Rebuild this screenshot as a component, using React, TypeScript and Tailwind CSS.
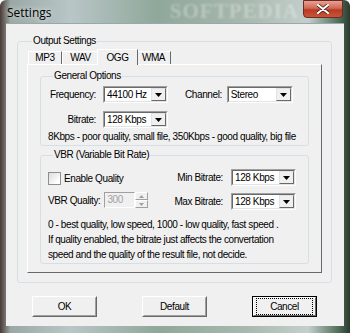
import React from "react";

const font = { fontFamily: '"Liberation Sans", Arial, sans-serif' };

function Combo({ value, width = "w-[65px]" }: { value: string; width?: string }) {
  return (
    <div
      className={`${width} h-[17px] flex bg-white border border-t-[#a0a0a0] border-l-[#a0a0a0] border-r-white border-b-white`}
    >
      <div className="flex-1 flex border border-t-[#696969] border-l-[#696969] border-r-[#e3e3e3] border-b-[#e3e3e3]">
        <span className="flex-1 pl-[2px] leading-[13px] text-black whitespace-nowrap overflow-hidden">{value}</span>
        <div className="w-[15px] bg-[#f0f0f0] border border-t-[#e3e3e3] border-l-[#e3e3e3] border-r-[#696969] border-b-[#696969] flex items-center justify-center">
          <svg width="7" height="4" viewBox="0 0 7 4">
            <path d="M0 0h7L3.5 4z" fill="#000" />
          </svg>
        </div>
      </div>
    </div>
  );
}

function Group({ title, className = "", children }: { title: string; className?: string; children: React.ReactNode }) {
  return (
    <fieldset className={`border border-[#d5dfe5] rounded-[3px] min-w-0 ${className}`}>
      <legend className="ml-[5px] px-[1px] leading-[12px] text-black">{title}</legend>
      {children}
    </fieldset>
  );
}

function Tab({ label, width, active = false }: { label: string; width: string; active?: boolean }) {
  return (
    <div
      className={`${width} flex items-center justify-center border-t border-l border-r border-t-white border-l-white border-r-[#696969] bg-[#f0f0f0] ${
        active ? "h-[16px] -mx-[2px] z-10 -mb-[1px] relative" : "h-[13px] mt-[2px]"
      }`}
    >
      <span className="leading-[12px]">{label}</span>
    </div>
  );
}

function Button({ label, focused = false }: { label: string; focused?: boolean }) {
  return (
    <div
      className={`w-[65px] h-[21px] border ${
        focused ? "border-black" : "border-t-white border-l-white border-r-[#696969] border-b-[#696969]"
      } bg-[#f0f0f0] flex`}
    >
      <div
        className={`flex-1 flex items-center justify-center border ${
          focused
            ? "border-t-white border-l-white border-r-[#696969] border-b-[#696969]"
            : "border-t-[#f0f0f0] border-l-[#f0f0f0] border-r-[#a0a0a0] border-b-[#a0a0a0]"
        }`}
      >
        <div
          className={`w-full h-full flex items-center justify-center ${
            focused ? "border border-dotted border-black m-[2px]" : ""
          }`}
        >
          {label}
        </div>
      </div>
    </div>
  );
}

export default function App() {
  return (
    <div
      className="w-[350px] h-[333px] flex flex-col overflow-hidden text-[10px] tracking-[-0.4px] text-black"
      style={font}
    >
      <div className="w-full h-full flex flex-col bg-[linear-gradient(90deg,#4a3a36_0%,#9aa8a4_3%,#b9c6c7_20%,#8fa89a_45%,#a8b8ae_70%,#c4cfcc_88%,#4d6b55_97%,#2a3a2e_100%)] rounded-t-[6px]">
        {/* title bar */}
        <div className="h-[23px] flex items-start pl-[7px] pr-[7px] overflow-hidden">
          <span
            className="mt-[6px] text-[12px] leading-[14px] tracking-normal text-black"
            style={{ fontFamily: '"Open Sans", "Liberation Sans", sans-serif', textShadow: "0 0 6px #fff" }}
          >
            Settings
          </span>
          <div className="flex-1 flex justify-end pr-[4px]">
            <span
              className="mt-[1px] text-[21px] leading-[21px] font-bold tracking-[1px] text-white/30 blur-[1px]"
              style={{ fontFamily: '"Liberation Serif", serif' }}
            >
              SOFTPEDIA
            </span>
          </div>
          <div className="w-[40px] h-[18px] shrink-0 rounded-b-[4px] border border-[#6b2a22] bg-[linear-gradient(180deg,#e8a093_0%,#d06a55_45%,#b83a22_55%,#c8553a_100%)] flex items-center justify-center">
            <svg width="12" height="10" viewBox="0 0 12 10">
              <path d="M1 1l10 8M11 1L1 9" stroke="#3a1510" strokeWidth="3.4" strokeLinecap="round" />
              <path d="M1 1l10 8M11 1L1 9" stroke="#fff" strokeWidth="2.2" strokeLinecap="round" />
            </svg>
          </div>
        </div>

        {/* client area */}
        <div className="flex-1 mx-[6px] mb-[7px] bg-[#f0f0f0] border-t border-t-[#9aa7ad] flex flex-col pl-[11px] pr-[12px] pt-[11px]">
          <Group title="Output Settings" className="pt-[1px] px-[9px] pb-[9px]">
            {/* tabs */}
            <div className="flex items-end pl-[1px] h-[16px]">
              <Tab label="MP3" width="w-[34px]" />
              <Tab label="WAV" width="w-[37px]" />
              <Tab label="OGG" width="w-[41px]" active />
              <Tab label="WMA" width="w-[35px]" />
            </div>
            <div className="h-[209px] border border-t-white border-l-white border-r-[#696969] border-b-[#696969] px-[12px] pt-[5px]">
              <Group title="General Options" className="px-[7px] pb-[2px]">
                <div className="flex items-center mt-[4px]">
                  <span className="w-[48px] text-right whitespace-nowrap">Frequency:</span>
                  <div className="ml-[7px]">
                    <Combo value="44100 Hz" />
                  </div>
                  <span className="ml-[17px]">Channel:</span>
                  <div className="ml-[5px]">
                    <Combo value="Stereo" width="w-[66px]" />
                  </div>
                </div>
                <div className="flex items-center mt-[8px]">
                  <span className="w-[48px] text-right">Bitrate:</span>
                  <div className="ml-[7px]">
                    <Combo value="128 Kbps" />
                  </div>
                </div>
                <div className="mt-[3px] leading-[12px] whitespace-nowrap">
                  8Kbps - poor quality, small file, 350Kbps - good quality, big file
                </div>
              </Group>

              <Group title="VBR (Variable Bit Rate)" className="mt-[3px] px-[7px] pb-[1px]">
                <div className="flex">
                  <div className="w-[130px]">
                    <div className="flex items-center mt-[11px] h-[13px]">
                      <div className="w-[13px] h-[13px] border border-[#8e8f8f] bg-[linear-gradient(135deg,#dcdcdc_0%,#ffffff_80%)]" />
                      <span className="ml-[3px]">Enable Quality</span>
                    </div>
                    <div className="flex items-center mt-[7px]">
                      <span>VBR Quality:</span>
                      <div className="ml-[4px] w-[31px] h-[16px] border border-t-[#a0a0a0] border-l-[#a0a0a0] border-r-white border-b-white bg-[#f0f0f0] text-[#a0a0a0] pl-[2px] leading-[14px]">
                        300
                      </div>
                      <div className="w-[13px] h-[16px] flex flex-col">
                        <div className="flex-1 border border-t-white border-l-white border-r-[#a0a0a0] border-b-[#a0a0a0] flex items-center justify-center">
                          <svg width="5" height="3" viewBox="0 0 5 3">
                            <path d="M0 3h5L2.5 0z" fill="#a0a0a0" />
                          </svg>
                        </div>
                        <div className="flex-1 border border-t-white border-l-white border-r-[#a0a0a0] border-b-[#a0a0a0] flex items-center justify-center">
                          <svg width="5" height="3" viewBox="0 0 5 3">
                            <path d="M0 0h5L2.5 3z" fill="#a0a0a0" />
                          </svg>
                        </div>
                      </div>
                    </div>
                  </div>
                  <div className="flex flex-col items-end flex-1 pr-[5px]">
                    <div className="flex items-center mt-[8px]">
                      <span className="whitespace-nowrap">Min Bitrate:</span>
                      <div className="ml-[8px]">
                        <Combo value="128 Kbps" />
                      </div>
                    </div>
                    <div className="flex items-center mt-[7px]">
                      <span className="whitespace-nowrap">Max Bitrate:</span>
                      <div className="ml-[8px]">
                        <Combo value="128 Kbps" />
                      </div>
                    </div>
                  </div>
                </div>
                <div className="mt-[7px] leading-[15px] whitespace-nowrap">
                  <div>0 - best quality, low speed, 1000 - low quality, fast speed .</div>
                  <div>If quality enabled, the bitrate just affects the convertation</div>
                  <div>speed and the quality of the result file, not decide.</div>
                </div>
              </Group>
            </div>
          </Group>

          <div className="flex justify-between pl-[15px] pr-[15px] mt-[13px]">
            <Button label="OK" />
            <Button label="Default" />
            <Button label="Cancel" focused />
          </div>
        </div>
      </div>
    </div>
  );
}
